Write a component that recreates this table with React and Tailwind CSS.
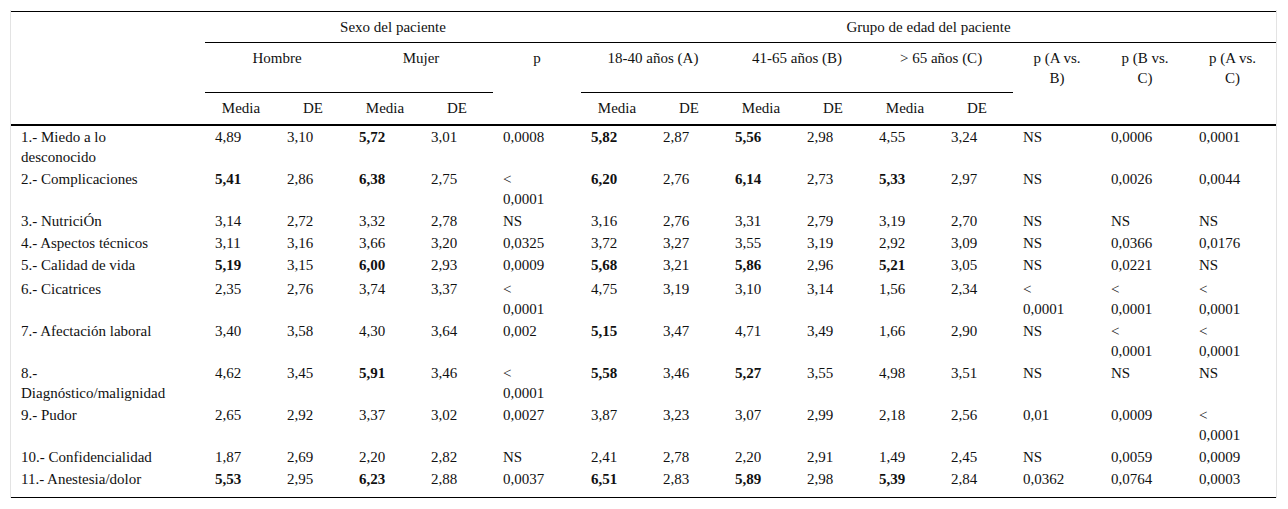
import React from "react";

const rows = [
  ["1.- Miedo a lo desconocido", "4,89", "3,10", "*5,72", "3,01", "0,0008", "*5,82", "2,87", "*5,56", "2,98", "4,55", "3,24", "NS", "0,0006", "0,0001"],
  ["2.- Complicaciones", "*5,41", "2,86", "*6,38", "2,75", "< 0,0001", "*6,20", "2,76", "*6,14", "2,73", "*5,33", "2,97", "NS", "0,0026", "0,0044"],
  ["3.- NutriciÓn", "3,14", "2,72", "3,32", "2,78", "NS", "3,16", "2,76", "3,31", "2,79", "3,19", "2,70", "NS", "NS", "NS"],
  ["4.- Aspectos técnicos", "3,11", "3,16", "3,66", "3,20", "0,0325", "3,72", "3,27", "3,55", "3,19", "2,92", "3,09", "NS", "0,0366", "0,0176"],
  ["5.- Calidad de vida", "*5,19", "3,15", "*6,00", "2,93", "0,0009", "*5,68", "3,21", "*5,86", "2,96", "*5,21", "3,05", "NS", "0,0221", "NS"],
  ["6.- Cicatrices", "2,35", "2,76", "3,74", "3,37", "< 0,0001", "4,75", "3,19", "3,10", "3,14", "1,56", "2,34", "< 0,0001", "< 0,0001", "< 0,0001"],
  ["7.- Afectación laboral", "3,40", "3,58", "4,30", "3,64", "0,002", "*5,15", "3,47", "4,71", "3,49", "1,66", "2,90", "NS", "< 0,0001", "< 0,0001"],
  ["8.- Diagnóstico/malignidad", "4,62", "3,45", "*5,91", "3,46", "< 0,0001", "*5,58", "3,46", "*5,27", "3,55", "4,98", "3,51", "NS", "NS", "NS"],
  ["9.- Pudor", "2,65", "2,92", "3,37", "3,02", "0,0027", "3,87", "3,23", "3,07", "2,99", "2,18", "2,56", "0,01", "0,0009", "< 0,0001"],
  ["10.- Confidencialidad", "1,87", "2,69", "2,20", "2,82", "NS", "2,41", "2,78", "2,20", "2,91", "1,49", "2,45", "NS", "0,0059", "0,0009"],
  ["11.- Anestesia/dolor", "*5,53", "2,95", "*6,23", "2,88", "0,0037", "*6,51", "2,83", "*5,89", "2,98", "*5,39", "2,84", "0,0362", "0,0764", "0,0003"],
];

const widths = [194, 72, 72, 72, 72, 88, 72, 72, 72, 72, 72, 72, 88, 88, 87];

// a leading * marks a bold value
const Cell = ({ value, tall }) => {
  const bold = value.startsWith("*");
  return (
    <td
      className={`pl-[10px] pr-[30px] pt-px align-top text-left ${tall ? "pb-[3px]" : "pb-px"} ${
        bold ? "font-bold" : ""
      }`}
    >
      {bold ? value.slice(1) : value}
    </td>
  );
};

const App = () => {
  const th = "px-[12px] pt-[5px] pb-[5px] align-top text-center font-normal";
  const sub = "pt-[5px] pb-[5px] align-top text-center font-normal border-b-2 border-black";

  return (
    <div className="min-h-screen bg-white pt-[10px] font-serif text-[15px] leading-[20px] text-[#111]">
      <div className="ml-[10px] w-[1267px] border-x border-[#e3e3e3] pt-px">
        <table className="w-[1265px] table-fixed border-collapse border-t border-black font-['Liberation_Serif']">
          <colgroup>
            {widths.map((w, i) => (
              <col key={i} style={{ width: w }} />
            ))}
          </colgroup>
          <thead>
            <tr className="h-[31px]">
              <th rowSpan={3} className="border-b-2 border-black"></th>
              <th colSpan={5} className={`${th} border-b border-black`}>Sexo del paciente</th>
              <th colSpan={9} className={`${th} border-b border-black`}>Grupo de edad del paciente</th>
            </tr>
            <tr className="h-[50px]">
              <th colSpan={2} className={`${th} border-b border-black`}>Hombre</th>
              <th colSpan={2} className={`${th} border-b border-black`}>Mujer</th>
              <th rowSpan={2} className={`${th} border-b-2 border-black`}>p</th>
              <th colSpan={2} className={`${th} border-b border-black`}>18-40 años (A)</th>
              <th colSpan={2} className={`${th} border-b border-black`}>41-65 años (B)</th>
              <th colSpan={2} className={`${th} border-b border-black`}>&gt; 65 años (C)</th>
              <th rowSpan={2} className={`${th} border-b-2 border-black`}>p (A vs. B)</th>
              <th rowSpan={2} className={`${th} border-b-2 border-black`}>p (B vs. C)</th>
              <th rowSpan={2} className={`${th} border-b-2 border-black`}>p (A vs. C)</th>
            </tr>
            <tr className="h-[32px]">
              <th className={sub}>Media</th>
              <th className={sub}>DE</th>
              <th className={sub}>Media</th>
              <th className={sub}>DE</th>
              <th className={sub}>Media</th>
              <th className={sub}>DE</th>
              <th className={sub}>Media</th>
              <th className={sub}>DE</th>
              <th className={sub}>Media</th>
              <th className={sub}>DE</th>
            </tr>
          </thead>
          <tbody>
            {rows.map((row, i) => (
              <tr key={i}>
                {row.map((v, j) => (
                  <Cell key={j} value={v} tall={i === 4} />
                ))}
              </tr>
            ))}
          </tbody>
        </table>
        <div className="h-[8px] border-b border-black"></div>
      </div>
    </div>
  );
};

export default App;
